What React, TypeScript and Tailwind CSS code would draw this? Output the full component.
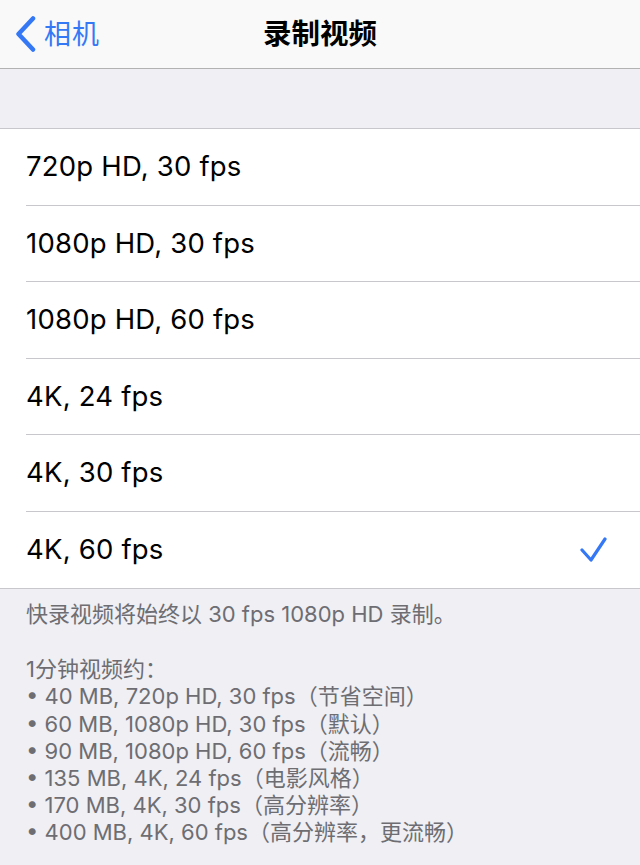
const options = [
  '720p HD, 30 fps',
  '1080p HD, 30 fps',
  '1080p HD, 60 fps',
  '4K, 24 fps',
  '4K, 30 fps',
  '4K, 60 fps',
];

const sizes = [
  '40 MB, 720p HD, 30 fps（节省空间）',
  '60 MB, 1080p HD, 30 fps（默认）',
  '90 MB, 1080p HD, 60 fps（流畅）',
  '135 MB, 4K, 24 fps（电影风格）',
  '170 MB, 4K, 30 fps（高分辨率）',
  '400 MB, 4K, 60 fps（高分辨率，更流畅）',
];

const font = { fontFamily: 'Inter, "Noto Sans CJK SC", sans-serif' };

export default function App() {
  const selected = 5;
  return (
    <div className="w-[640px] h-[865px] bg-[#efeff4] overflow-hidden" style={font}>
      <div className="h-[69px] bg-[#f9f9f9] border-b border-[#b2b2b2] flex items-center relative">
        <div className="flex items-center pl-[15px] gap-[8px] text-[#3478f6]">
          <svg width="21" height="36" viewBox="0 0 21 36" fill="none">
            <path d="M18 2.5 L3.5 18 L18 33.5" stroke="#3478f6" strokeWidth="4.5" strokeLinecap="round" strokeLinejoin="round" />
          </svg>
          <span className="text-[27px] leading-none tracking-[1px]">相机</span>
        </div>
        <div className="absolute left-0 right-0 text-center text-[28.5px] font-semibold text-black pointer-events-none">
          录制视频
        </div>
      </div>

      <div className="h-[60px] border-b border-[#c8c7cc]" />

      <div className="bg-white border-b border-[#c8c7cc]">
        {options.map((o, i) => (
          <div key={o} className="pl-[26px]">
            <div
              className={
                'h-[76.5px] flex items-center justify-between pr-[32px] ' +
                (i < options.length - 1 ? 'border-b border-[#c8c7cc]' : '')
              }
            >
              <span className="text-[27.5px] text-black tracking-[0.2px]">{o}</span>
              {i === selected && (
                <svg width="28" height="28" viewBox="0 0 28 28" fill="none">
                  <path d="M2 14 L11 24 L25 3" stroke="#3478f6" strokeWidth="3.2" strokeLinecap="round" strokeLinejoin="round" />
                </svg>
              )}
            </div>
          </div>
        ))}
      </div>

      <div className="px-[26px] pt-[12px] text-[22px] leading-[27.2px] text-[#6d6d72]">
        <p>快录视频将始终以 30 fps 1080p HD 录制。</p>
        <p className="mt-[28px]">1分钟视频约：</p>
        {sizes.map((s) => (
          <p key={s}>• {s}</p>
        ))}
      </div>
    </div>
  );
}
